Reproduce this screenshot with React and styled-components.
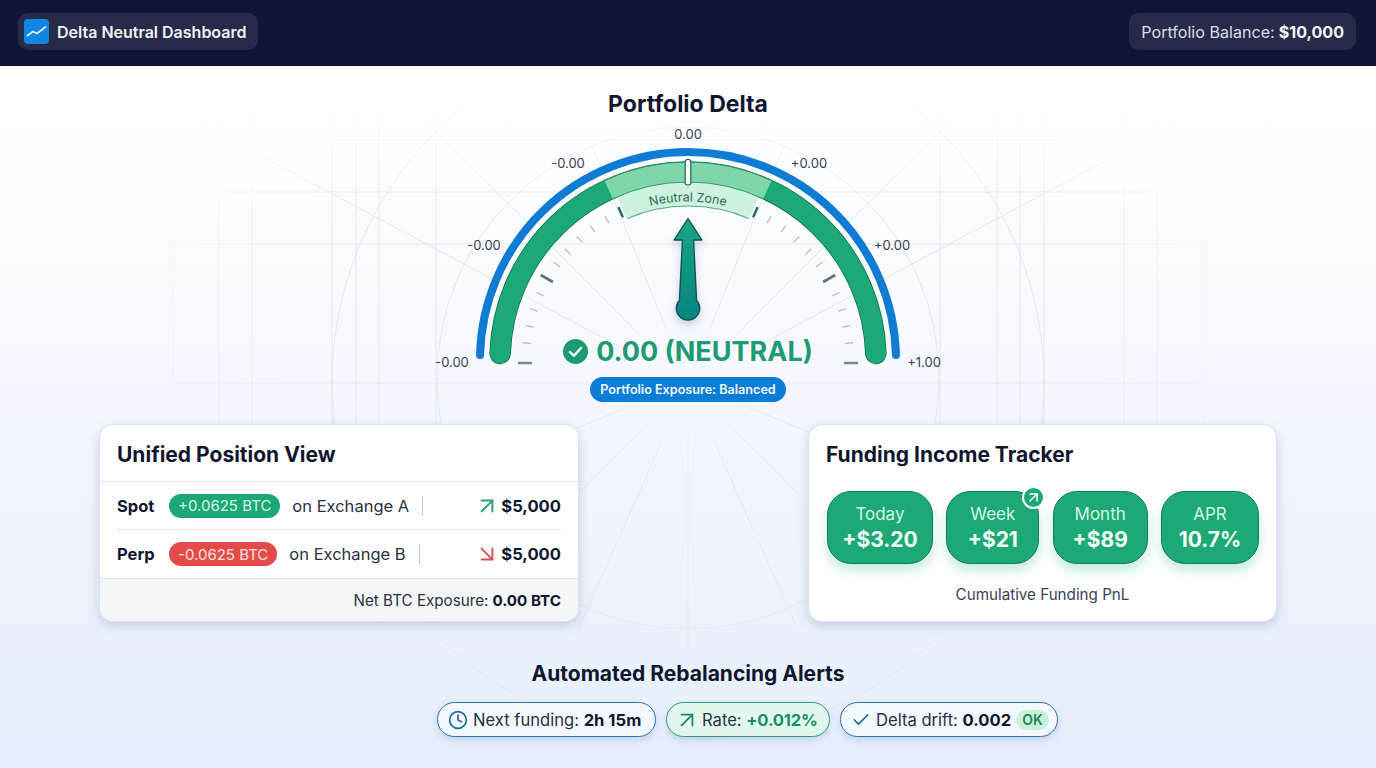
import React from "react";
import styled, { createGlobalStyle } from "styled-components";
import { ArrowDownRight, ArrowUpRight, Check, Clock } from "lucide-react";

const GlobalStyle = createGlobalStyle`
    * {
        box-sizing: border-box;
    }
    html, body {
        margin: 0;
        padding: 0;
    }
    body {
        font-family: Inter, "Liberation Sans", sans-serif;
        color: #10162f;
    }
`;

const Page = styled.div`
    position: relative;
    width: 1376px;
    height: 768px;
    overflow: hidden;
    background: linear-gradient(180deg, #ffffff 0%, #ffffff 10%, #f6f9fe 45%, #eef4fd 72%, #e5eefb 100%);
`;

const Header = styled.header`
    position: relative;
    display: flex;
    justify-content: space-between;
    align-items: center;
    height: 66px;
    padding: 0 20px 3px 18px;
    background: #101636;
    box-shadow: inset 0 -2px 0 #0d1230;
`;

const HeaderPill = styled.div`
    display: flex;
    align-items: center;
    gap: 8px;
    height: 37px;
    padding: ${(p) => (p.$brand ? "0 12px 0 6px" : "0 12px")};
    border-radius: 10px;
    background: #272b47;
    font-size: ${(p) => (p.$brand ? 16 : 16.1)}px;
    font-weight: ${(p) => (p.$brand ? 600 : 400)};
    color: ${(p) => (p.$brand ? "#f0f2fa" : "#d9dcec")};

    b {
        margin-left: -4px;
        font-weight: 700;
        color: #f3f5fc;
    }
`;

const BrandIcon = styled.svg`
    display: block;
    width: 25px;
    height: 25px;
`;

const BackgroundLines = styled.svg`
    position: absolute;
    top: 0;
    left: 0;
    width: 1376px;
    height: 768px;
    pointer-events: none;
`;

const Main = styled.main`
    position: relative;
    display: flex;
    flex-direction: column;
    align-items: center;
    padding-top: 23px;
`;

const GaugeTitle = styled.h1`
    margin: 0 0 6px;
    height: 30px;
    font-size: 23px;
    line-height: 30px;
    font-weight: 700;
    color: #10162f;
`;

const GaugeStack = styled.section`
    display: grid;
    width: 520px;
    height: 277px;
`;

const GaugeSvg = styled.svg`
    grid-area: 1 / 1;
    display: block;
    width: 520px;
    height: 250px;
    overflow: visible;
`;

const GaugeLabel = styled.text`
    font-family: Inter, "Liberation Sans", sans-serif;
    font-size: 13px;
    fill: #384054;
    text-anchor: middle;
`;

const ZoneText = styled.text`
    font-family: Inter, "Liberation Sans", sans-serif;
    font-size: 12.5px;
    fill: #2c6b58;
    text-anchor: middle;
`;

const Needle = styled.path`
    filter: drop-shadow(0 4px 4px rgba(30, 50, 80, 0.22));
`;

const Readout = styled.div`
    grid-area: 1 / 1;
    align-self: end;
    display: flex;
    flex-direction: column;
    align-items: center;
    gap: 8px;
`;

const ReadoutValue = styled.div`
    display: flex;
    align-items: center;
    gap: 8px;
    height: 36px;
    font-size: 27px;
    font-weight: 700;
    color: #1f9a72;
`;

const ExposurePill = styled.div`
    display: flex;
    align-items: center;
    height: 25px;
    padding: 0 10px;
    border-radius: 13px;
    background: #0b7dd6;
    font-size: 12.6px;
    font-weight: 600;
    color: #f2f8ff;
`;

const CardRow = styled.section`
    display: flex;
    justify-content: space-between;
    width: 1178px;
    margin-top: 22px;
`;

const Card = styled.article`
    display: flex;
    flex-direction: column;
    width: ${(p) => p.$width}px;
    height: 198px;
    overflow: hidden;
    border: 1px solid #dde2ea;
    border-radius: 14px;
    background: #ffffff;
    box-shadow: 0 4px 12px rgba(60, 80, 120, 0.22);
`;

const CardTitle = styled.h2`
    margin: 0;
    height: 57px;
    padding: 15px 17px 0;
    font-size: 21px;
    line-height: 30px;
    font-weight: 700;
    color: #10162f;
    border-bottom: ${(p) => (p.$ruled ? "1px solid #e2e5ea" : "none")};
`;

const PositionRows = styled.div`
    display: flex;
    flex-direction: column;
    padding: 0 17px;
`;

const PositionRow = styled.div`
    display: flex;
    align-items: center;
    height: 48px;
    font-size: 16.5px;
    border-bottom: ${(p) => (p.$last ? "none" : "1px solid #e2e5ea")};
`;

const LegName = styled.span`
    width: 52px;
    font-weight: 700;
    color: #10162f;
`;

const AmountPill = styled.span`
    display: flex;
    align-items: center;
    height: 24px;
    padding: 0 9px;
    border-radius: 12px;
    font-size: 15px;
    color: ${(p) => (p.$tone === "up" ? "#d5f6e6" : "#fde0de")};
    background: ${(p) => (p.$tone === "up" ? "#1ca874" : "#e34b4b")};
`;

const Venue = styled.span`
    margin-left: 12px;
    color: #2a3040;
`;

const Separator = styled.span`
    width: 1px;
    height: 20px;
    margin-left: 13px;
    background: #c6cad1;
`;

const Trend = styled.span`
    display: flex;
    margin-left: auto;
    margin-right: 1px;
    color: ${(p) => (p.$tone === "up" ? "#2b9f7a" : "#d9534f")};
`;

const Usd = styled.span`
    font-size: 16.6px;
    font-weight: 700;
    color: #10162f;
`;

const CardFooter = styled.div`
    display: flex;
    justify-content: flex-end;
    align-items: center;
    flex: 1;
    padding: 0 17px;
    border-top: 1px solid #e2e5ea;
    background: #f5f6f8;
    font-size: 15.2px;
    color: #2a3040;

    b {
        margin-left: 4px;
        font-weight: 700;
        color: #10162f;
    }
`;

const TileRow = styled.div`
    display: flex;
    gap: 13.5px;
    padding: 9px 17px 0 18px;
`;

const Tile = styled.div`
    position: relative;
    display: flex;
    flex-direction: column;
    align-items: center;
    justify-content: center;
    width: ${(p) => p.$width}px;
    height: 73px;
    border: 1px solid #167a5c;
    border-radius: 24px;
    background: #1ca975;
    box-shadow: 0 7px 12px rgba(40, 190, 130, 0.28);
`;

const TileLabel = styled.span`
    font-size: 17px;
    line-height: 24px;
    color: #d4f4e4;
`;

const TileValue = styled.span`
    font-size: 21px;
    line-height: 28px;
    font-weight: 700;
    color: #f4fdf8;
`;

const TileBadge = styled.span`
    position: absolute;
    top: -6px;
    right: -7px;
    display: flex;
    align-items: center;
    justify-content: center;
    width: 23px;
    height: 23px;
    border: 2px solid #ffffff;
    border-radius: 50%;
    background: #1ca975;
    color: #ffffff;
`;

const CardNote = styled.p`
    margin: 21px 0 0;
    font-size: 15.2px;
    line-height: 20px;
    text-align: center;
    color: #3a4252;
`;

const AlertsTitle = styled.h2`
    margin: 38px 0 14px;
    height: 28px;
    font-size: 21px;
    line-height: 28px;
    font-weight: 700;
    color: #10162f;
`;

const AlertRow = styled.div`
    display: flex;
    gap: 10px;
    margin-left: 119px;
`;

const AlertPill = styled.div`
    display: flex;
    align-items: center;
    gap: 6px;
    width: ${(p) => p.$width}px;
    height: 35px;
    padding-left: 11px;
    border: 1.5px solid ${(p) => (p.$tone === "green" ? "#2f9a7c" : "#2874ad")};
    border-radius: 18px;
    background: ${(p) => (p.$tone === "green" ? "#e1f8ee" : "#f3f9ff")};
    box-shadow: 0 3px 7px rgba(50, 90, 150, 0.2);
    font-size: 16.6px;
    white-space: nowrap;
    color: #2a3040;

    b {
        font-weight: 700;
        color: #10162f;
    }
`;

const AlertIcon = styled.span`
    display: flex;
    justify-content: center;
    align-items: center;
    width: 18px;
    height: 18px;
    color: ${(p) => (p.$tone === "green" ? "#1f8a68" : "#1f6a9c")};

    svg {
        flex-shrink: 0;
    }
`;

const RateValue = styled.b`
    && {
        letter-spacing: -0.2px;
        color: #1c8f66;
    }
`;

const OkTag = styled.span`
    display: flex;
    align-items: center;
    height: 20px;
    margin-left: -1px;
    padding: 0 6px;
    border-radius: 10px;
    background: #c9f0d9;
    font-size: 14px;
    font-weight: 600;
    color: #18875c;
`;

const CX = 688;
const CY = 360;

const polar = (r, deg) => {
    // deg measured from straight up, clockwise
    const a = (deg * Math.PI) / 180;
    return [CX + r * Math.sin(a), CY - r * Math.cos(a)];
};

const arc = (r, from, to) => {
    const [x1, y1] = polar(r, from);
    const [x2, y2] = polar(r, to);
    return `M${x1} ${y1} A${r} ${r} 0 ${to - from > 180 ? 1 : 0} 1 ${x2} ${y2}`;
};

const sector = (r1, r2, deg) => {
    const [ax, ay] = polar(r2, -deg);
    const [bx, by] = polar(r2, deg);
    const [cx, cy] = polar(r1, deg);
    const [dx, dy] = polar(r1, -deg);
    return `M${ax} ${ay} A${r2} ${r2} 0 0 1 ${bx} ${by} L${cx} ${cy} A${r1} ${r1} 0 0 0 ${dx} ${dy} Z`;
};

const tickAngles = [6, 12, 18, 24, 30, 36, 42, 48, 54, 60];

const Gauge = () => (
    <GaugeSvg viewBox="428 125 520 250">
        <defs>
            <linearGradient id="needleFill" x1="0" y1="0" x2="0" y2="1">
                <stop offset="0" stopColor="#1ba681" />
                <stop offset="1" stopColor="#08857f" />
            </linearGradient>
            <path id="zoneCurve" d={arc(158.5, -40, 40)} />
        </defs>

        <path d={arc(208, -88.6, 88.6)} fill="none" stroke="#0f7bd3" strokeWidth="8" strokeLinecap="round" />
        <path d={arc(188, -88, 88)} fill="none" stroke="#0f6a52" strokeWidth="21.5" strokeLinecap="round" />
        <path d={arc(188, -88, 88)} fill="none" stroke="#1ca975" strokeWidth="20" strokeLinecap="round" />
        <path d={sector(178, 198, 25)} fill="#7fd6aa" />
        <path d={arc(198, -25, 25)} fill="none" stroke="#2f8f6d" strokeWidth="1" />

        <path d={sector(156, 176, 22.8)} fill="#cdf3de" stroke="#cdf3de" strokeWidth="4" strokeLinejoin="round" />
        <path d={arc(154, -23.2, 23.2)} fill="none" stroke="#5ea98b" strokeWidth="1.2" />
        <path d={arc(178, -25, 25)} fill="none" stroke="#3f9a7a" strokeWidth="1" />

        {[-24.5, 24.5].map((deg) => {
            const [x1, y1] = polar(157, deg);
            const [x2, y2] = polar(168, deg);
            return <line key={deg} x1={x1} y1={y1} x2={x2} y2={y2} stroke="#1b6b56" strokeWidth="2.4" />;
        })}

        <ZoneText>
            <textPath href="#zoneCurve" startOffset="50%">Neutral Zone</textPath>
        </ZoneText>

        <rect x="685.2" y="159.5" width="5.6" height="25.5" rx="2.4" fill="#f8fbfa" stroke="#1e5a4b" strokeWidth="1.1" />

        {[-1, 1].map((side) =>
            tickAngles.map((t) => {
                const major = t === 30;
                const [x1, y1] = polar(major ? 156 : 158, side * (90 - t));
                const [x2, y2] = polar(major ? 170 : 166, side * (90 - t));
                return (
                    <line
                        key={`${side}${t}`}
                        x1={x1}
                        y1={y1}
                        x2={x2}
                        y2={y2}
                        stroke={major ? "#667085" : "#c2c8cf"}
                        strokeWidth={major ? 2.6 : 1.6}
                    />
                );
            })
        )}
        <line x1="518" y1="363" x2="532" y2="363" stroke="#7b8494" strokeWidth="2.4" />
        <line x1="844" y1="363" x2="858" y2="363" stroke="#7b8494" strokeWidth="2.4" />

        <Needle
            d="M688 218.5 L702 240 H693.6 L696.6 300.5 A11.7 11.7 0 1 1 679.4 300.5 L682.4 240 H674 Z"
            fill="url(#needleFill)"
            stroke="#0f4f58"
            strokeWidth="1.3"
            strokeLinejoin="round"
        />

        <GaugeLabel x="688" y="139">0.00</GaugeLabel>
        <GaugeLabel x="568" y="168">-0.00</GaugeLabel>
        <GaugeLabel x="809" y="168">+0.00</GaugeLabel>
        <GaugeLabel x="484" y="250">-0.00</GaugeLabel>
        <GaugeLabel x="892" y="250">+0.00</GaugeLabel>
        <GaugeLabel x="452" y="367">-0.00</GaugeLabel>
        <GaugeLabel x="924" y="367">+1.00</GaugeLabel>
    </GaugeSvg>
);

const GCX = 688;
const GCY = 383;
const verticals = [173, 219, 252, 332, 356, 379, 436, 940, 997, 1020, 1044, 1124, 1157, 1203];
const horizontals = [140, 192, 244, 383];
// [degrees from straight up, length]
const spokes = [
    [-62, 550], [62, 550], [-45, 365], [45, 365], [-22, 260], [22, 260],
    [-112, 150], [112, 150], [-135, 160], [135, 160], [-156, 270], [156, 270], [180, 265],
];

const Backdrop = () => (
    <BackgroundLines viewBox="0 0 1376 768">
        <defs>
            <radialGradient id="fade" gradientUnits="userSpaceOnUse" cx={GCX} cy={GCY} r="560">
                <stop offset="0.07" stopColor="#000" />
                <stop offset="0.14" stopColor="#fff" />
                <stop offset="0.7" stopColor="#fff" />
                <stop offset="1" stopColor="#000" />
            </radialGradient>
            <linearGradient id="topFade" x1="0" y1="0" x2="0" y2="1">
                <stop offset="0.09" stopColor="#000" />
                <stop offset="0.3" stopColor="#fff" />
            </linearGradient>
            <mask id="fadeMask">
                <rect width="1376" height="768" fill="url(#fade)" />
            </mask>
            <mask id="topMask">
                <rect width="1376" height="768" fill="url(#topFade)" />
            </mask>
        </defs>
        <g mask="url(#topMask)">
            <g mask="url(#fadeMask)" fill="none" stroke="#e3e8ef" strokeWidth="1">
                {verticals.map((x) => (
                    <line key={x} x1={x} y1="110" x2={x} y2="625" />
                ))}
                {horizontals.map((y) => (
                    <line key={y} x1="170" y1={y} x2="1206" y2={y} />
                ))}
                {spokes.map(([deg, len]) => {
                    const a = (deg * Math.PI) / 180;
                    return (
                        <line
                            key={deg}
                            x1={GCX}
                            y1={GCY}
                            x2={GCX + len * Math.sin(a)}
                            y2={GCY - len * Math.cos(a)}
                        />
                    );
                })}
                <circle cx={GCX} cy={GCY} r="356" />
                <circle cx={GCX} cy="378" r="251" />
            </g>
        </g>
    </BackgroundLines>
);

const positions = [
    { leg: "Spot", amount: "+0.0625 BTC", venue: "on Exchange A", tone: "up", Icon: ArrowUpRight },
    { leg: "Perp", amount: "-0.0625 BTC", venue: "on Exchange B", tone: "down", Icon: ArrowDownRight },
];

const tiles = [
    { label: "Today", value: "+$3.20", width: 106 },
    { label: "Week", value: "+$21", width: 93, badge: true },
    { label: "Month", value: "+$89", width: 95 },
    { label: "APR", value: "10.7%", width: 98 },
];

const App = () => (
    <Page>
        <GlobalStyle />
        <Backdrop />
        <Header>
            <HeaderPill $brand>
                <BrandIcon viewBox="0 0 25 25">
                    <rect width="25" height="25" rx="4" fill="#0f86e2" />
                    <path d="M3 17 L9 12.5 L13 14.5 L22 7.5" fill="none" stroke="#e6f4ff" strokeWidth="1.6" strokeLinejoin="round" />
                </BrandIcon>
                Delta Neutral Dashboard
            </HeaderPill>
            <HeaderPill>
                Portfolio Balance: <b>$10,000</b>
            </HeaderPill>
        </Header>
        <Main>
            <GaugeTitle>Portfolio Delta</GaugeTitle>
            <GaugeStack>
                <Gauge />
                <Readout>
                    <ReadoutValue>
                        <svg width="25" height="25" viewBox="0 0 25 25">
                            <circle cx="12.5" cy="12.5" r="12.5" fill="#1a9c70" />
                            <path d="M7 13 L11 16.8 L18 9" fill="none" stroke="#fff" strokeWidth="2.4" strokeLinecap="round" strokeLinejoin="round" />
                        </svg>
                        0.00 (NEUTRAL)
                    </ReadoutValue>
                    <ExposurePill>Portfolio Exposure: Balanced</ExposurePill>
                </Readout>
            </GaugeStack>
            <CardRow>
                <Card $width={480}>
                    <CardTitle $ruled>Unified Position View</CardTitle>
                    <PositionRows>
                        {positions.map(({ leg, amount, venue, tone, Icon }, i) => (
                            <PositionRow key={leg} $last={i === positions.length - 1}>
                                <LegName>{leg}</LegName>
                                <AmountPill $tone={tone}>{amount}</AmountPill>
                                <Venue>{venue}</Venue>
                                <Separator />
                                <Trend $tone={tone}>
                                    <Icon size={26} strokeWidth={1.8} />
                                </Trend>
                                <Usd>$5,000</Usd>
                            </PositionRow>
                        ))}
                    </PositionRows>
                    <CardFooter>
                        Net BTC Exposure: <b>0.00 BTC</b>
                    </CardFooter>
                </Card>
                <Card $width={469}>
                    <CardTitle>Funding Income Tracker</CardTitle>
                    <TileRow>
                        {tiles.map((tile) => (
                            <Tile key={tile.label} $width={tile.width}>
                                <TileLabel>{tile.label}</TileLabel>
                                <TileValue>{tile.value}</TileValue>
                                {tile.badge && (
                                    <TileBadge>
                                        <ArrowUpRight size={17} strokeWidth={2} />
                                    </TileBadge>
                                )}
                            </Tile>
                        ))}
                    </TileRow>
                    <CardNote>Cumulative Funding PnL</CardNote>
                </Card>
            </CardRow>
            <AlertsTitle>Automated Rebalancing Alerts</AlertsTitle>
            <AlertRow>
                <AlertPill $width={219}>
                    <AlertIcon>
                        <Clock size={20} strokeWidth={2} />
                    </AlertIcon>
                    <span>Next funding: <b>2h 15m</b></span>
                </AlertPill>
                <AlertPill $tone="green" $width={164}>
                    <AlertIcon $tone="green">
                        <ArrowUpRight size={26} strokeWidth={1.7} />
                    </AlertIcon>
                    <span>Rate: <RateValue>+0.012%</RateValue></span>
                </AlertPill>
                <AlertPill $width={218}>
                    <AlertIcon>
                        <Check size={20} strokeWidth={2} />
                    </AlertIcon>
                    <span>Delta drift: <b>0.002</b></span>
                    <OkTag>OK</OkTag>
                </AlertPill>
            </AlertRow>
        </Main>
    </Page>
);

export default App;
